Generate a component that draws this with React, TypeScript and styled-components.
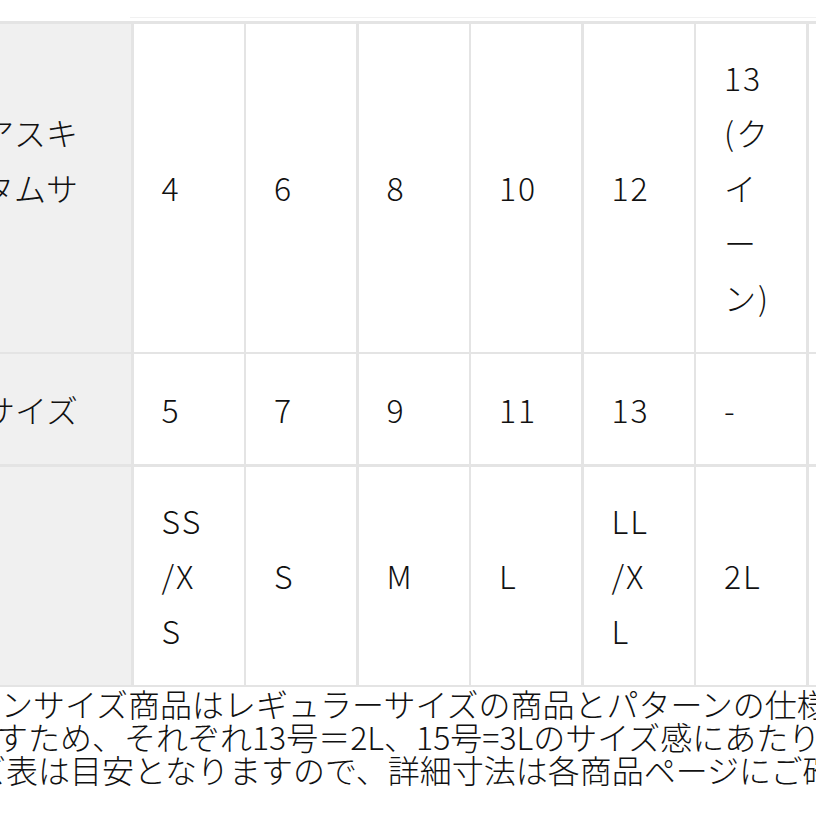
import styled, {createGlobalStyle} from 'styled-components';

const GlobalStyle = createGlobalStyle`
  html, body {
    margin: 0;
    padding: 0;
    background: #fff;
  }

  body {
    font-family: "Noto Sans CJK JP", "Noto Sans", sans-serif;
    font-weight: 300;
    color: #111;
  }
`;

const Page = styled.div`
  width: 816px;
  height: 816px;
  overflow: hidden;
  background: #fff;
`;

const TopRule = styled.div`
  height: 17px;
  margin-left: 130px;
  border-bottom: 1px solid #f1f1f1;
  margin-bottom: 3px;
`;

const Table = styled.div`
  display: grid;
  grid-template-columns: 131px repeat(7, 110px);
  grid-template-rows: 328px 110px 218px;
  gap: 2.5px;
  padding: 2.5px 0;
  background: #e4e4e4;
  width: max-content;
`;

const HeadCell = styled.div`
  background: #f0f0f0;
  display: flex;
  flex-direction: column;
  justify-content: center;
  align-items: flex-end;
  padding-right: 53px;
  font-size: 32px;
  line-height: 55px;
  white-space: nowrap;
  overflow: hidden;
`;

const Cell = styled.div`
  background: #fff;
  display: flex;
  flex-direction: column;
  justify-content: center;
  align-items: flex-start;
  padding-left: 28px;
  font-size: 32px;
  line-height: 55px;
  letter-spacing: 2px;
  white-space: nowrap;
`;

const Notes = styled.div`
  font-size: 32px;
  line-height: 33px;
  white-space: nowrap;
`;

const NoteLine = styled.div<{$shift: number}>`
  margin-left: ${p => p.$shift}px;
`;

const rows: {head: string[]; cells: string[][]}[] = [
  {
    head: ['アスキ', 'タムサ', '\u00a0'],
    cells: [['4'], ['6'], ['8'], ['10'], ['12'], ['13', '(ク', 'イ', 'ー', 'ン)'], ['']],
  },
  {
    head: ['サイズ'],
    cells: [['5'], ['7'], ['9'], ['11'], ['13'], ['-'], ['']],
  },
  {
    head: [],
    cells: [['SS', '/X', 'S'], ['S'], ['M'], ['L'], ['LL', '/X', 'L'], ['2L'], ['']],
  },
];

const notes = [
  {shift: 1, text: 'ンサイズ商品はレギュラーサイズの商品とパターンの仕様'},
  {shift: -4, text: 'すため、それぞれ13号＝2L、15号=3Lのサイズ感にあたり'},
  {shift: -26, text: 'ズ表は目安となりますので、詳細寸法は各商品ページにご確'},
];

const App = () => {
  return (
    <Page>
      <GlobalStyle/>
      <TopRule/>
      <Table>
        {rows.map((row, r) => (
          <>
            <HeadCell key={`h${r}`}>
              {row.head.map((line, i) => <span key={i}>{line}</span>)}
            </HeadCell>
            {row.cells.map((lines, c) => (
              <Cell key={`c${r}-${c}`}>
                {lines.map((line, i) => <span key={i}>{line}</span>)}
              </Cell>
            ))}
          </>
        ))}
      </Table>
      <Notes>
        {notes.map((n, i) => <NoteLine key={i} $shift={n.shift}>{n.text}</NoteLine>)}
      </Notes>
    </Page>
  );
};

export default App;
